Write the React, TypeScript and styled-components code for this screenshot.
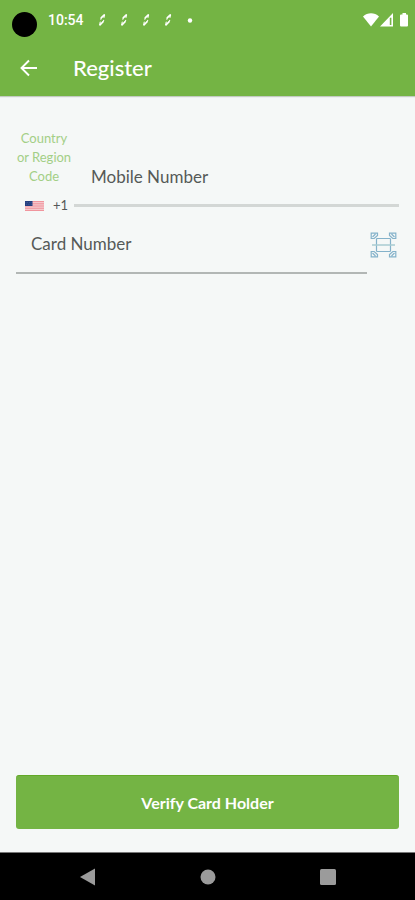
import React from "react";
import styled, { createGlobalStyle } from "styled-components";

const green = "#74b444";

const GlobalStyle = createGlobalStyle`
  * { box-sizing: border-box; }
  body { margin: 0; background: #f5f8f7; }
  button, input { font-family: inherit; border: 0; background: none; padding: 0; border-radius: 0; }
  svg { display: block; flex: none; }
`;

const Screen = styled.div`
  min-height: 100vh;
  display: flex;
  flex-direction: column;
  background: #f5f8f7;
  font-family: Lato, "Liberation Sans", sans-serif;
`;

const Header = styled.header`
  background: ${green};
  color: #fff;
  box-shadow: 0 1px 1px #c3cbc2;
`;

const StatusBar = styled.div`
  height: 40px;
  padding: 0 6px 0 12px;
  display: flex;
  align-items: center;
`;

const Camera = styled.span`
  width: 25px;
  height: 25px;
  margin-top: 8px;
  border-radius: 50%;
  background: #000;
`;

const Clock = styled.time`
  margin: 0 14px 0 11px;
  font: 500 14px/20px Roboto, sans-serif;
`;

const Notices = styled.div`
  display: flex;
  align-items: center;
  gap: 14px;
`;

const SystemIcons = styled.div`
  margin-left: auto;
  display: flex;
  align-items: center;
`;

const AppBar = styled.div`
  height: 56px;
  padding-left: 20px;
  display: flex;
  align-items: center;
  gap: 36px;
`;

const IconButton = styled.button`
  display: grid;
  place-items: center;
  color: inherit;
  cursor: pointer;
`;

const Title = styled.h1`
  margin: 0;
  font-size: 22px;
  line-height: 28px;
  font-weight: 500;
`;

const Form = styled.form`
  flex: 1;
  padding: 33px 16px 23px;
  display: flex;
  flex-direction: column;
`;

const PhoneRow = styled.div`
  display: grid;
  grid-template-columns: 56px 1fr;
  align-items: end;
  column-gap: 2px;
`;

const CountryPicker = styled.button`
  display: block;
  text-align: center;
  cursor: pointer;
`;

const CountryLabel = styled.span`
  display: block;
  margin-bottom: 10px;
  color: #a3cf86;
  font-size: 13px;
  line-height: 19px;
`;

const DialCode = styled.span`
  display: flex;
  align-items: center;
  gap: 9px;
  padding-left: 9px;
  color: #555957;
  font-size: 13px;
  line-height: 19px;
`;

const TextInput = styled.input<{ $rule: string; $indent: number }>`
  flex: 1;
  width: 100%;
  min-width: 0;
  height: 59px;
  padding: 0 8px 0 ${(p) => p.$indent}px;
  border-bottom: ${(p) => p.$rule};
  color: #454a48;
  font-size: 17px;
  outline: none;
  &::placeholder { color: #555a58; opacity: 1; }
`;

const PhoneInput = styled(TextInput)`
  margin-bottom: 8px;
`;

const CardRow = styled.div`
  display: flex;
  align-items: center;
  gap: 3px;
  padding-right: 2px;
`;

const SubmitButton = styled.button`
  height: 54px;
  margin-top: auto;
  border-radius: 3px;
  border-top: 1px solid #62a827;
  background: ${green};
  color: #fff;
  font-size: 16px;
  font-weight: 700;
  cursor: pointer;
`;

const NavBar = styled.nav`
  height: 48px;
  border-top: 1px solid #777;
  background: #000;
  color: #9b9b9b;
  display: flex;
  justify-content: center;
  align-items: center;
  gap: 96px;
`;

const NoticeIcon = () => (
  <svg width="8" height="14" viewBox="0 0 8 14" fill="none" stroke="#fff" strokeLinecap="round">
    <path strokeWidth="1.7" d="M6.3 2 3.4 4.6M4.8 9 2 11.9" />
    <path strokeWidth="1.1" d="M3.4 4.6 2.8 6.2M6.4 2.2 6 4.4M2.2 9 1.8 11.5M5.7 7.4 4.8 9" />
  </svg>
);

const DotIcon = () => (
  <svg width="8" height="5" viewBox="0 0 8 5" fill="#fff"><circle cx="4" cy="2.5" r="2.2" /></svg>
);

const StatusIcons = () => (
  <svg width="46" height="14" viewBox="0 0 46 14" fill="#fff">
    <path d="M0 3.5C4.5-.7 11.5-.7 16 3.5L8 13.5Z" />
    <path fillRule="evenodd" d="M30 0V13.5H17ZM26.8 4.7V12H28.4V4.7Z" />
    <path d="M39.5 1.5V0h3.500v1.500h1q1 0 1 1v10q0 1-1 1h-6q-1 0-1-1v-10q0-1 1-1Z" />
  </svg>
);

const BackArrow = () => (
  <svg width="17" height="18" viewBox="0 0 17 18" fill="none" stroke="currentColor" strokeWidth="1.9">
    <path d="M17 9H2M9 1.5 1.5 9 9 16.5" />
  </svg>
);

const UsFlag = () => (
  <svg width="19" height="10" viewBox="0 0 19 10">
    <path fill="#f8d5d8" d="M0 0h19v10H0z" />
    <path stroke="#ee8d96" strokeWidth=".9" d="M0 .5h19M0 2.3h19M0 4.1h19M0 5.9h19M0 7.7h19M0 9.5h19" />
    <path fill="#233f80" d="M0 0h7.5v5H0z" />
    <path stroke="#6f82b0" strokeWidth=".5" strokeDasharray=".7 1" d="M.7 1.5h6M1.2 3.3h6" />
  </svg>
);

const ScanIcon = () => (
  <svg width="27" height="26" viewBox="0 0 27 26" fill="none" stroke="#84b2ca" strokeWidth="1.2">
    <rect x="6.5" y="6.5" width="14" height="13" rx=".8" />
    <path stroke="#a9cdd2" strokeWidth="1.5" d="M2 13h23" />
    <path d="M7.5 3.5V1.2H1.2v5.3h3L7.5 3.5ZM2.5 5 5.5 2M19.5 3.5V1.2h6.3v5.3h-3L19.5 3.5ZM24.5 5 21.5 2M7.5 22.5v2.3H1.2v-5.3h3L7.5 22.5ZM2.5 21 5.5 24M19.5 22.5v2.3h6.3v-5.3h-3L19.5 22.5ZM24.5 21 21.5 24" />
  </svg>
);

export default function App() {
  return (
    <Screen>
      <GlobalStyle />
      <Header>
        <StatusBar>
          <Camera />
          <Clock>10:54</Clock>
          <Notices>
            {[0, 1, 2, 3].map((n) => <NoticeIcon key={n} />)}
            <DotIcon />
          </Notices>
          <SystemIcons><StatusIcons /></SystemIcons>
        </StatusBar>
        <AppBar>
          <IconButton type="button" aria-label="Back"><BackArrow /></IconButton>
          <Title>Register</Title>
        </AppBar>
      </Header>
      <Form onSubmit={(e) => e.preventDefault()}>
        <PhoneRow>
          <CountryPicker type="button">
            <CountryLabel>Country or Region Code</CountryLabel>
            <DialCode><UsFlag />+1</DialCode>
          </CountryPicker>
          <PhoneInput type="tel" aria-label="Mobile Number" placeholder="Mobile Number" $rule="3px solid #d3d7d5" $indent={17} />
        </PhoneRow>
        <CardRow>
          <TextInput inputMode="numeric" aria-label="Card Number" placeholder="Card Number" $rule="2px solid #b2b7b5" $indent={15} />
          <IconButton type="button" aria-label="Scan card"><ScanIcon /></IconButton>
        </CardRow>
        <SubmitButton type="submit">Verify Card Holder</SubmitButton>
      </Form>
      <NavBar aria-label="System">
        <IconButton type="button" aria-label="System back">
          <svg width="24" height="18" viewBox="0 0 24 18" fill="currentColor"><path d="M4 9 19 .5v17Z" /></svg>
        </IconButton>
        <IconButton type="button" aria-label="Home">
          <svg width="24" height="18" viewBox="0 0 24 18" fill="currentColor"><circle cx="12" cy="9" r="7.5" /></svg>
        </IconButton>
        <IconButton type="button" aria-label="Recent apps">
          <svg width="24" height="18" viewBox="0 0 24 18" fill="currentColor"><rect x="4" y="1" width="16" height="16" rx="1.5" /></svg>
        </IconButton>
      </NavBar>
    </Screen>
  );
}
